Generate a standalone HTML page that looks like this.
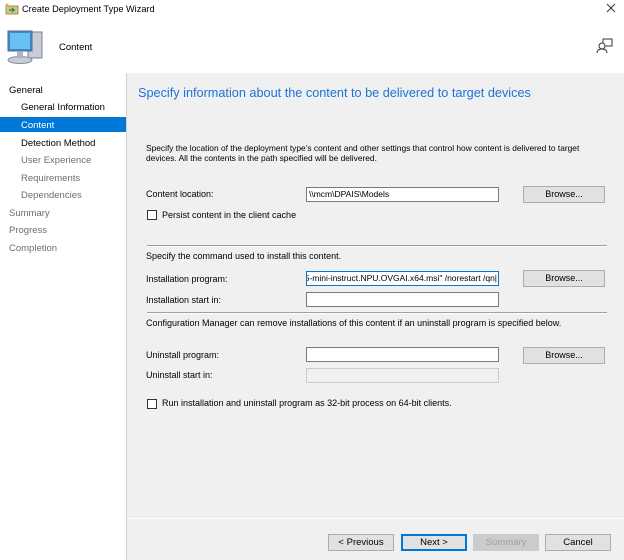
<!DOCTYPE html>
<html><head><style>
*{margin:0;padding:0;box-sizing:border-box}
body{width:624px;height:560px;position:relative;background:#fff;font-family:"Liberation Sans",sans-serif;font-size:9px;color:#000;overflow:hidden}
.a{position:absolute;white-space:nowrap}
.nav{font-size:9.5px;left:21px}
.g{color:#6d6d6d}
.in{position:absolute;background:#fff;border:1px solid #7a7a7a;height:15px;width:193px;left:306px;font-size:8.5px;line-height:13px;padding-left:2px;overflow:hidden;white-space:nowrap}
.btn{position:absolute;background:#e1e1e1;border:1px solid #adadad;height:17px;text-align:center;line-height:15px;font-size:9px}
.cb{position:absolute;width:10px;height:10px;border:1px solid #333;background:#fff}
.sep{position:absolute;height:2px;border-top:1px solid #a0a0a0;border-bottom:1px solid #fff}
</style></head><body>
<svg class="a" style="left:5px;top:3px" width="14" height="12" viewBox="0 0 14 12"><rect x="1" y="3" width="12" height="8" fill="#d8c48a" stroke="#8a7a40" stroke-width=".8"/><path d="M4 7h5l-2-2M9 7l-2 2" stroke="#2a9a3a" stroke-width="1.5" fill="none"/><circle cx="2" cy="2" r="1.5" fill="#f0b030"/></svg>
<div class="a" style="left:22px;top:4px;font-size:9.2px">Create Deployment Type Wizard</div>
<svg class="a" style="left:606px;top:3px" width="10" height="10" viewBox="0 0 10 10" stroke="#333" stroke-width="1"><path d="M1 1L9 9M9 1L1 9"/></svg>
<svg class="a" style="left:4px;top:28px" width="42" height="38" viewBox="0 0 42 38"><rect x="24" y="4" width="14" height="26" fill="#c8ccd8" stroke="#7a8090"/><rect x="4" y="3" width="24" height="20" fill="#3a8ad8" stroke="#5a6a80"/><rect x="6" y="5" width="20" height="16" fill="#6ac0f0"/><ellipse cx="16" cy="32" rx="12" ry="3.5" fill="#c8ccd8" stroke="#8a90a0"/><rect x="13" y="23" width="6" height="7" fill="#b0b4c0"/></svg>
<div class="a" style="left:59px;top:42px;font-size:9.5px">Content</div>
<svg class="a" style="left:596px;top:37px" width="18" height="18" viewBox="0 0 18 18" fill="none" stroke="#333" stroke-width="1"><rect x="7" y="2" width="9" height="7"/><circle cx="6" cy="9" r="3" fill="#fff"/><path d="M1 16c0-3 2-4 5-4s5 1 5 4"/></svg>
<div class="a" style="left:0;top:73px;width:127px;height:487px;background:#fff"></div>
<div class="a" style="left:126px;top:73px;width:1px;height:487px;background:#d0d0d0"></div>
<div class="a" style="left:127px;top:73px;width:497px;height:487px;background:#f0f0f0"></div>
<div class="a" style="left:9px;top:85px;font-size:9.5px">General</div>
<div class="a nav" style="top:102px">General Information</div>
<div class="a" style="left:0;top:117px;width:126px;height:15px;background:#0078d7"></div>
<div class="a nav" style="top:120px;color:#fff">Content</div>
<div class="a nav" style="top:138px">Detection Method</div>
<div class="a nav g" style="top:155px">User Experience</div>
<div class="a nav g" style="top:173px">Requirements</div>
<div class="a nav g" style="top:190px">Dependencies</div>
<div class="a g" style="left:9px;top:208px;font-size:9.5px">Summary</div>
<div class="a g" style="left:9px;top:225px;font-size:9.5px">Progress</div>
<div class="a g" style="left:9px;top:243px;font-size:9.5px">Completion</div>
<div class="a" style="left:138px;top:86px;font-size:12.7px;color:#1e72d8">Specify information about the content to be delivered to target devices</div>
<div class="a" style="left:146px;top:143px;font-size:8.4px;line-height:10px">Specify the location of the deployment type’s content and other settings that control how content is delivered to target<br>devices. All the contents in the path specified will be delivered.</div>
<div class="a" style="left:146px;top:189px">Content location:</div>
<div class="in" style="top:187px">\\mcm\DPAIS\Models</div>
<div class="btn" style="left:523px;top:186px;width:82px">Browse...</div>
<div class="cb" style="left:147px;top:210px"></div>
<div class="a" style="left:162px;top:210px">Persist content in the client cache</div>
<div class="sep" style="left:147px;top:245px;width:460px"></div>
<div class="a" style="left:146px;top:251px">Specify the command used to install this content.</div>
<div class="a" style="left:146px;top:274px">Installation program:</div>
<div class="in" style="top:271px;border-color:#0078d7;display:flex;justify-content:flex-end;padding-right:1px">5-mini-instruct.NPU.OVGAI.x64.msi" /norestart /qn|</div>
<div class="btn" style="left:523px;top:270px;width:82px">Browse...</div>
<div class="a" style="left:146px;top:295px">Installation start in:</div>
<div class="in" style="top:292px"></div>
<div class="sep" style="left:147px;top:312px;width:460px"></div>
<div class="a" style="left:146px;top:318px">Configuration Manager can remove installations of this content if an uninstall program is specified below.</div>
<div class="a" style="left:146px;top:350px">Uninstall program:</div>
<div class="in" style="top:347px"></div>
<div class="btn" style="left:523px;top:347px;width:82px">Browse...</div>
<div class="a" style="left:146px;top:370px">Uninstall start in:</div>
<div class="in" style="top:368px;background:#f0f0f0;border-color:#ccc"></div>
<div class="cb" style="left:147px;top:399px"></div>
<div class="a" style="left:162px;top:398px">Run installation and uninstall program as 32-bit process on 64-bit clients.</div>
<div class="a" style="left:127px;top:518px;width:497px;height:1px;background:#fff"></div>
<div class="btn" style="left:328px;top:534px;width:66px;font-size:9.5px">&lt; Previous</div>
<div class="btn" style="left:401px;top:534px;width:66px;border:2px solid #0078d7;line-height:13px;font-size:9.5px">Next &gt;</div>
<div class="btn" style="left:473px;top:534px;width:66px;color:#a0a0a0;background:#ccc;border-color:#ccc;font-size:9.5px">Summary</div>
<div class="btn" style="left:545px;top:534px;width:66px;font-size:9.5px">Cancel</div>
</body></html>
